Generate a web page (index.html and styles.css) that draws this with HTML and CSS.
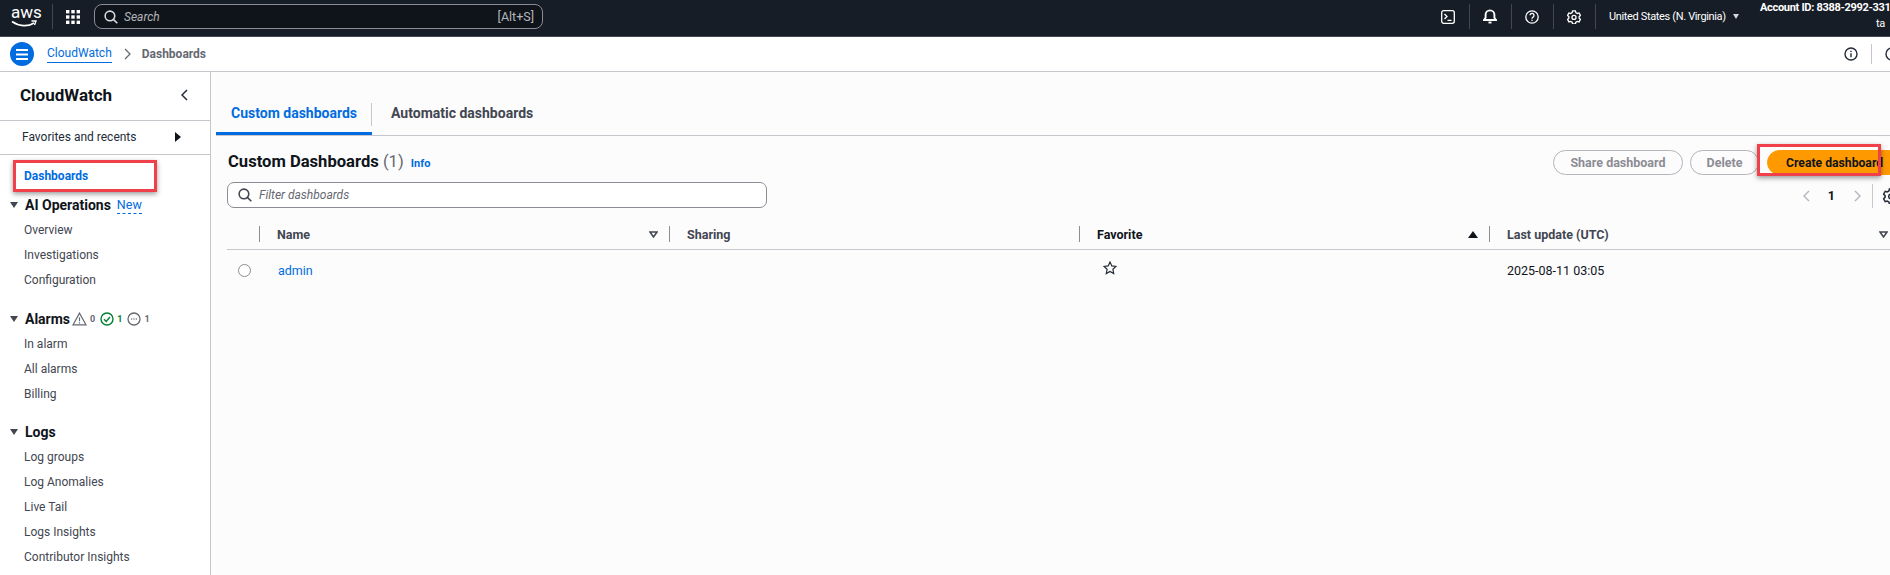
FILE: index.html
```html
<!DOCTYPE html>
<html lang="en">
<head>
<meta charset="UTF-8">
<title>CloudWatch Dashboards</title>
<link rel="stylesheet" href="styles.css">
</head>
<body>
<div class="page">
    <header class="topbar">
        <div class="aws-logo">
            <span class="aws-word">aws</span>
            <svg class="aws-smile" width="26" height="8" viewBox="0 0 26 8"><path d="M1 1.500c7 5 16 5.500 22 1.500" fill="none" stroke="#fff" stroke-width="1.600"/><path d="M20.500 1h4.500l-1.500 4" fill="none" stroke="#fff" stroke-width="1.400"/></svg>
        </div>
        <span class="top-sep sep-logo"></span>
        <svg class="grid-icon" width="14" height="14" viewBox="0 0 14 14" fill="#fff"><rect x="0" y="0" width="3.400" height="3.400"/><rect x="5.300" y="0" width="3.400" height="3.400"/><rect x="10.600" y="0" width="3.400" height="3.400"/><rect x="0" y="5.300" width="3.400" height="3.400"/><rect x="5.300" y="5.300" width="3.400" height="3.400"/><rect x="10.600" y="5.300" width="3.400" height="3.400"/><rect x="0" y="10.600" width="3.400" height="3.400"/><rect x="5.300" y="10.600" width="3.400" height="3.400"/><rect x="10.600" y="10.600" width="3.400" height="3.400"/></svg>
        <div class="top-search">
            <svg width="14" height="14" viewBox="0 0 16 16" fill="none" stroke="#d5d8dc" stroke-width="1.800"><circle cx="6.800" cy="6.800" r="5.500"/><path d="M11 11l4.200 4.200"/></svg>
            <span class="top-search-text">Search</span>
            <span class="top-search-key">[Alt+S]</span>
        </div>
        <div class="top-right">
            <svg class="top-icon" width="14" height="14" viewBox="0 0 14 14" fill="none" stroke="#fff" stroke-width="1.300"><rect x="0.700" y="0.700" width="12.600" height="12.600" rx="2"/><path d="M3.500 4l2.500 2.500-2.500 2.500M6.500 10.300h4"/></svg>
            <span class="top-sep"></span>
            <svg class="top-icon" width="14" height="15" viewBox="0 0 14 15" fill="none" stroke="#fff" stroke-width="1.900"><path d="M1 11h12l-1.600-2.200V5.800a4.400 4.400 0 0 0-8.800 0v3z"/><path d="M5.500 13.500h3"/></svg>
            <span class="top-sep"></span>
            <svg class="top-icon" width="14" height="14" viewBox="0 0 14 14" fill="none" stroke="#fff" stroke-width="1.300"><circle cx="7" cy="7" r="6.200"/><path d="M5 5.300a2 2 0 1 1 3 1.800c-.7.400-1 .8-1 1.600M7 9.700v1.300"/></svg>
            <span class="top-sep"></span>
            <svg class="top-icon" width="14" height="14" viewBox="0 0 16 16" fill="none" stroke="#fff" stroke-width="1.500"><path d="M6.400 1h3.200l.5 2 1.700 1 2-.6 1.600 2.800-1.500 1.400v1.800l1.500 1.400-1.600 2.800-2-.6-1.700 1-.5 2H6.400l-.5-2-1.700-1-2 .6L.6 10.800l1.500-1.400V7.600L.6 6.200l1.600-2.800 2 .6 1.700-1z"/><circle cx="8" cy="8.500" r="2.300"/></svg>
            <span class="top-sep"></span>
            <span class="region">United States (N. Virginia)</span>
            <span class="region-caret"></span>
            <div class="account">
                <span class="account-id">Account ID: 8388-2992-3311</span>
                <span class="account-user">ta</span>
            </div>
        </div>
    </header>

    <div class="crumbs">
        <div class="menu-btn">
            <svg width="12" height="11" viewBox="0 0 12 11" stroke="#fff" stroke-width="2"><path d="M0 1h12M0 5.500h12M0 10h12"/></svg>
        </div>
        <a class="crumb-link">CloudWatch</a>
        <svg class="crumb-chevron" width="7" height="12" viewBox="0 0 7 12" fill="none" stroke="#656871" stroke-width="1.300"><path d="M1 1l5 5-5 5"/></svg>
        <span class="crumb-current">Dashboards</span>
        <div class="crumb-right">
            <svg width="14" height="14" viewBox="0 0 14 14" fill="none" stroke="#232b37" stroke-width="1.400"><circle cx="7" cy="7" r="6"/><path d="M7 6.200v4M7 3.700v1.300"/></svg>
            <span class="crumb-sep"></span>
            <svg width="14" height="14" viewBox="0 0 14 14" fill="none" stroke="#232b37" stroke-width="1.400"><circle cx="7" cy="7" r="6"/></svg>
        </div>
    </div>

    <div class="layout">
        <aside class="sidebar">
            <div class="side-title">
                <span>CloudWatch</span>
                <svg width="7" height="12" viewBox="0 0 7 12" fill="none" stroke="#232b37" stroke-width="1.500"><path d="M6 1L1 6l5 5"/></svg>
            </div>
            <div class="side-favs">
                <span>Favorites and recents</span>
                <span class="tri-right"></span>
            </div>
            <nav class="side-nav">
                <div class="side-active">Dashboards</div>

                <div class="side-group">
                    <div class="side-head"><span class="tri-down"></span>AI Operations<span class="new-tag">New</span></div>
                    <div class="side-item">Overview</div>
                    <div class="side-item">Investigations</div>
                    <div class="side-item">Configuration</div>
                </div>

                <div class="side-group">
                    <div class="side-head side-head-alarms"><span class="tri-down"></span>Alarms<span class="alarm-stats">
                            <svg width="15" height="14" viewBox="0 0 14 13" fill="none" stroke="#656871" stroke-width="1.100"><path d="M7 1L.9 12h12.200zM7 4.800v3.700M7 9.500v1.200"/></svg>
                            <span class="alarm-num">0</span>
                            <svg width="14" height="14" viewBox="0 0 14 14" fill="none" stroke="#00802f" stroke-width="1.400"><circle cx="7" cy="7" r="6"/><path d="M4 7.200l2.200 2.200L10 5"/></svg>
                            <span class="alarm-num green">1</span>
                            <svg width="14" height="14" viewBox="0 0 14 14" fill="none" stroke="#656871" stroke-width="1.300"><circle cx="7" cy="7" r="6"/><path d="M4.200 7h1M6.500 7h1M8.800 7h1"/></svg>
                            <span class="alarm-num">1</span>
                        </span>
                    </div>
                    <div class="side-item">In alarm</div>
                    <div class="side-item">All alarms</div>
                    <div class="side-item">Billing</div>
                </div>

                <div class="side-group">
                    <div class="side-head"><span class="tri-down"></span>Logs</div>
                    <div class="side-item">Log groups</div>
                    <div class="side-item">Log Anomalies</div>
                    <div class="side-item">Live Tail</div>
                    <div class="side-item">Logs Insights</div>
                    <div class="side-item">Contributor Insights</div>
                </div>
            </nav>
        </aside>

        <main class="content">
            <div class="tabs">
                <div class="tab tab-active">Custom dashboards</div>
                <div class="tab">Automatic dashboards</div>
            </div>

            <section class="panel">
                <div class="panel-head">
                    <div class="panel-left">
                        <h2 class="panel-title">Custom Dashboards <span class="panel-count">(1)</span> <a class="info-link">Info</a></h2>
                        <div class="filter">
                            <svg width="14" height="14" viewBox="0 0 16 16" fill="none" stroke="#424650" stroke-width="1.800"><circle cx="6.800" cy="6.800" r="5.500"/><path d="M11 11l4.200 4.200"/></svg>
                            <span>Filter dashboards</span>
                        </div>
                    </div>
                    <div class="panel-right">
                        <div class="actions">
                            <button class="btn">Share dashboard</button>
                            <button class="btn btn-delete">Delete</button>
                            <button class="btn btn-primary">Create dashboard</button>
                        </div>
                        <div class="pager">
                            <svg width="7" height="12" viewBox="0 0 7 12" fill="none" stroke="#b4b4bb" stroke-width="1.400"><path d="M6 1L1 6l5 5"/></svg>
                            <span class="pager-num">1</span>
                            <svg width="7" height="12" viewBox="0 0 7 12" fill="none" stroke="#b4b4bb" stroke-width="1.400"><path d="M1 1l5 5-5 5"/></svg>
                            <span class="pager-sep"></span>
                            <svg width="16" height="16" viewBox="0 0 16 16" fill="none" stroke="#232b37" stroke-width="1.500"><path d="M6.400 1h3.200l.5 2 1.700 1 2-.6 1.600 2.800-1.500 1.400v1.800l1.500 1.400-1.600 2.800-2-.6-1.700 1-.5 2H6.400l-.5-2-1.700-1-2 .6L.6 10.800l1.500-1.400V7.600L.6 6.200l1.600-2.800 2 .6 1.700-1z"/><circle cx="8" cy="8.500" r="2.300"/></svg>
                        </div>
                    </div>
                </div>

                <div class="table-row table-head">
                    <div class="cell cell-select"></div>
                    <div class="cell cell-name">
                        <span>Name</span>
                        <svg class="sort" width="9" height="7" viewBox="0 0 9 7" fill="none" stroke="#424650" stroke-width="1.500"><path d="M1 1h7L4.500 6z"/></svg>
                    </div>
                    <div class="cell cell-sharing"><span>Sharing</span></div>
                    <div class="cell cell-fav">
                        <span class="head-strong">Favorite</span>
                        <svg class="sort" width="10" height="7" viewBox="0 0 10 7" fill="#0f141a"><path d="M5 0l5 7H0z"/></svg>
                    </div>
                    <div class="cell cell-update">
                        <span>Last update (UTC)</span>
                        <svg class="sort" width="9" height="7" viewBox="0 0 9 7" fill="none" stroke="#424650" stroke-width="1.500"><path d="M1 1h7L4.500 6z"/></svg>
                    </div>
                </div>

                <div class="table-row table-body">
                    <div class="cell cell-select"><span class="radio"></span></div>
                    <div class="cell cell-name"><a class="row-link">admin</a></div>
                    <div class="cell cell-sharing"></div>
                    <div class="cell cell-fav">
                        <svg class="star" width="14" height="14" viewBox="0 0 14 14" fill="none" stroke="#232b37" stroke-width="1.200"><path d="M7 1l1.800 3.900 4.200.5-3.100 2.900.8 4.200L7 10.500l-3.700 2 .8-4.200L1 5.400l4.200-.5z"/></svg>
                    </div>
                    <div class="cell cell-update">2025-08-11 03:05</div>
                </div>
            </section>
        </main>
    </div>

    <div class="mark mark-nav"></div>
    <div class="mark mark-create"></div>
</div>
</body>
</html>
```

FILE: styles.css
```css
html, body {
    margin: 0;
    height: 100%;
    overflow: hidden;
}
body {
    font-family: Roboto, sans-serif;
    font-size: 13px;
    color: #0f141a;
    background-color: #fff;
}
.page {
    position: relative;
    width: 1890px;
    height: 575px;
    overflow: hidden;
}

/* top bar */
.topbar {
    display: flex;
    align-items: center;
    height: 37px;
    box-sizing: border-box;
    padding-bottom: 3px;
    background-color: #161d26;
    border-bottom: 1px solid #424650;
    color: #fff;
}
.aws-logo {
    width: 26px;
    height: 30px;
    margin-left: 11px;
}
.aws-word {
    display: block;
    font-size: 17px;
    line-height: 20px;
    text-align: center;
}
.aws-smile {
    display: block;
    margin-top: -2px;
}
.top-sep {
    flex: none;
    width: 1px;
    height: 25px;
    background-color: #424650;
}
.sep-logo {
    margin-left: 15px;
}
.grid-icon {
    margin-left: 13px;
}
.top-search {
    display: flex;
    align-items: center;
    width: 449px;
    height: 25px;
    margin-left: 14px;
    padding: 0 8px 0 9px;
    box-sizing: border-box;
    background-color: #0f141a;
    border: 1px solid #8c8c94;
    border-radius: 8px;
}
.top-search-text {
    margin-left: 6px;
    font-style: italic;
    font-size: 12px;
    color: #b4b4bb;
}
.top-search-key {
    margin-left: auto;
    font-size: 12.500px;
    color: #b4b4bb;
}
.top-right {
    display: flex;
    align-items: center;
    flex: none;
    width: 449px;
    margin-left: auto;
    gap: 13.500px;
}
.top-icon {
    flex: none;
}
.region {
    flex: none;
    width: 116px;
    font-size: 11px;
    letter-spacing: -0.35px;
    white-space: nowrap;
}
.region-caret {
    flex: none;
    width: 0;
    height: 0;
    margin-left: -6px;
    border-left: 3.500px solid transparent;
    border-right: 3.500px solid transparent;
    border-top: 5px solid #d5d8dc;
}
.account {
    display: flex;
    flex-direction: column;
    flex: none;
    align-self: flex-start;
    width: 140px;
    margin-left: 8px;
    margin-top: -1px;
    font-size: 11px;
    font-weight: 700;
    letter-spacing: -0.3px;
    line-height: 16px;
    white-space: nowrap;
}
.account-user {
    padding-left: 116px;
    font-weight: 400;
}

/* breadcrumb bar */
.crumbs {
    display: flex;
    align-items: center;
    height: 35px;
    box-sizing: border-box;
    background-color: #fff;
    border-bottom: 1px solid #c6c6cd;
}
.menu-btn {
    display: flex;
    align-items: center;
    justify-content: center;
    width: 24px;
    height: 24px;
    margin-left: 10px;
    background-color: #006ce0;
    border-radius: 50%;
}
.crumb-link {
    margin-left: 13px;
    color: #006ce0;
    font-size: 12px;
    line-height: 17px;
    border-bottom: 1px solid #006ce0;
}
.crumb-chevron {
    margin-left: 12px;
}
.crumb-current {
    margin-left: 11px;
    font-size: 12px;
    font-weight: 700;
    color: #656871;
}
.crumb-right {
    display: flex;
    align-items: center;
    margin-left: auto;
    margin-right: -9px;
    gap: 13px;
}
.crumb-sep {
    width: 1px;
    height: 20px;
    background-color: #c6c6cd;
}

.layout {
    display: flex;
    height: 503px;
}

/* sidebar */
.sidebar {
    flex: none;
    width: 211px;
    box-sizing: border-box;
    background-color: #fff;
    border-right: 1px solid #c6c6cd;
}
.side-title {
    display: flex;
    align-items: center;
    justify-content: space-between;
    height: 49px;
    box-sizing: border-box;
    padding: 0 22px 2px 20px;
    font-size: 17px;
    font-weight: 700;
    border-bottom: 1px solid #c6c6cd;
}
.side-favs {
    display: flex;
    align-items: center;
    justify-content: space-between;
    height: 34px;
    box-sizing: border-box;
    padding: 0 29px 1px 22px;
    font-size: 12px;
    color: #232b37;
    border-bottom: 1px solid #c6c6cd;
}
.tri-right {
    width: 0;
    height: 0;
    border-top: 5px solid transparent;
    border-bottom: 5px solid transparent;
    border-left: 6px solid #0f141a;
}
.side-nav {
    padding-top: 9px;
    font-size: 12px;
}
.side-active {
    padding-left: 24px;
    height: 25px;
    line-height: 25px;
    color: #006ce0;
    font-weight: 700;
}
.side-group {
    margin-bottom: 12px;
}
.side-active + .side-group {
    margin-top: 3px;
}
.side-head {
    display: flex;
    align-items: center;
    height: 26px;
    padding-left: 10px;
    font-size: 14px;
    font-weight: 700;
}
.side-head-alarms {
    height: 27px;
}
.tri-down {
    width: 0;
    height: 0;
    margin-right: 7px;
    border-left: 4px solid transparent;
    border-right: 4px solid transparent;
    border-top: 6px solid #424650;
}
.new-tag {
    margin-left: 6px;
    color: #006ce0;
    font-size: 12.500px;
    font-weight: 400;
    line-height: 17px;
    border-bottom: 1px dashed #006ce0;
}
.alarm-stats {
    display: flex;
    align-items: center;
    margin-left: 2px;
    font-weight: 400;
}
.alarm-num {
    margin: 0 5px 0 3px;
    font-size: 9px;
    font-weight: 700;
    color: #656871;
}
.alarm-num.green {
    color: #00802f;
}
.side-item {
    height: 25px;
    line-height: 25px;
    padding-left: 24px;
    color: #424650;
}

/* main content */
.content {
    flex: none;
    width: 1691px;
    box-sizing: border-box;
    padding: 24px 0 0 5px;
    background-color: #fcfcfd;
}
.tabs {
    display: flex;
    align-items: center;
    height: 39px;
    border-bottom: 1px solid #c6c6cd;
    font-size: 14px;
    font-weight: 700;
    color: #424650;
    white-space: nowrap;
}
.tab {
    height: 39px;
    line-height: 34px;
    padding: 0 16px 0 19px;
    box-sizing: border-box;
}
.tab-active {
    position: relative;
    width: 156px;
    padding-left: 15px;
    color: #006ce0;
    border-bottom: 3px solid #006ce0;
}
.tab-active::after {
    content: "";
    position: absolute;
    right: 0;
    top: 7px;
    height: 23px;
    width: 1px;
    background-color: #c6c6cd;
}
.panel {
    padding-left: 11px;
}
.panel-head {
    display: flex;
    justify-content: space-between;
    padding-top: 13px;
}
.panel-title {
    margin: 0;
    height: 33px;
    padding-left: 1px;
    font-size: 16.600px;
    line-height: 26px;
    font-weight: 700;
}
.panel-count {
    font-weight: 400;
    color: #656871;
}
.info-link {
    margin-left: 3px;
    font-size: 11px;
    font-weight: 700;
    color: #006ce0;
}
.filter {
    display: flex;
    align-items: center;
    width: 540px;
    height: 26px;
    box-sizing: border-box;
    padding-left: 10px;
    gap: 7px;
    border: 1px solid #8c8c94;
    border-radius: 7px;
    background-color: #fff;
    font-size: 12px;
    font-style: italic;
    color: #656871;
}
.actions {
    display: flex;
    align-items: center;
    gap: 7px;
    height: 25px;
    margin-top: 1px;
}
.btn {
    flex: none;
    height: 25px;
    padding: 0;
    width: 130px;
    font-family: inherit;
    font-size: 12.500px;
    font-weight: 700;
    color: #8c8c94;
    background-color: transparent;
    border: 1px solid #b4b4bb;
    border-radius: 13px;
    white-space: nowrap;
}
.btn-delete {
    width: 69px;
}
.btn-primary {
    width: 135px;
    margin-left: 1px;
    padding-left: 18px;
    font-size: 12.200px;
    color: #0f141a;
    background-color: #ff9900;
    border-color: #ff9900;
    text-align: left;
}
.panel-right {
    display: flex;
    flex-direction: column;
    align-items: flex-end;
}
.pager {
    display: flex;
    align-items: center;
    height: 25px;
    margin-top: 8px;
    margin-right: 3px;
}
.pager-num {
    margin: 0 19px 0 18px;
    font-size: 12.500px;
    font-weight: 700;
}
.pager-sep {
    width: 1px;
    height: 24px;
    margin: 0 10px 0 11px;
    background-color: #c6c6cd;
}

/* table */
.table-row {
    display: flex;
}
.table-head {
    height: 31px;
    box-sizing: border-box;
    margin-top: 11px;
    font-size: 12.500px;
    font-weight: 700;
    color: #424650;
    border-bottom: 1px solid #c6c6cd;
}
.table-head .cell {
    position: relative;
}
.table-head .cell::before {
    content: "";
    position: absolute;
    left: 0;
    top: 7px;
    height: 16px;
    width: 1px;
    background-color: #8c8c94;
}
.table-head .cell-select::before {
    left: 32px;
}
.head-strong {
    color: #0f141a;
}
.table-body {
    height: 40px;
    font-size: 12.500px;
}
.cell {
    display: flex;
    align-items: center;
    box-sizing: border-box;
}
.cell-select {
    width: 32px;
    padding-left: 11px;
}
.cell-name {
    width: 410px;
    padding: 0 11px 0 18px;
    justify-content: space-between;
}
.cell-sharing {
    width: 410px;
    padding-left: 18px;
}
.cell-fav {
    width: 410px;
    padding: 0 11px 0 18px;
    justify-content: space-between;
}
.cell-update {
    flex: 1;
    padding: 0 14px 0 18px;
    justify-content: space-between;
}
.radio {
    width: 11px;
    height: 11px;
    background-color: #fff;
    border: 1px solid #8c8c94;
    border-radius: 50%;
}
.row-link {
    margin-left: 1px;
    color: #006ce0;
}
.star {
    margin: -4px 0 0 6px;
}

/* red annotation boxes drawn on the screenshot */
.mark {
    position: absolute;
    box-sizing: border-box;
    border: 3px solid #f0414a;
    box-shadow: 0 2px 5px rgba(0, 0, 0, 0.4);
}
.mark-nav {
    left: 13px;
    top: 160px;
    width: 144px;
    height: 32px;
}
.mark-create {
    left: 1757px;
    top: 144px;
    width: 124px;
    height: 32px;
}
```
